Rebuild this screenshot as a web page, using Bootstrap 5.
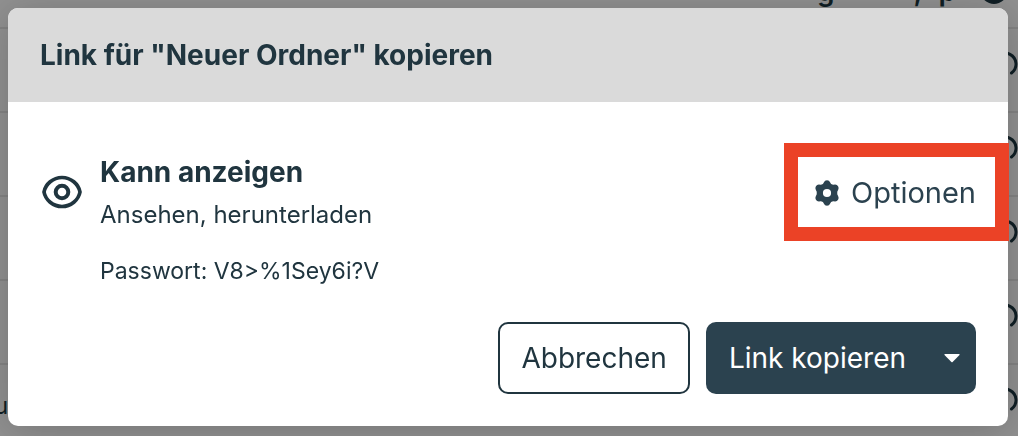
<!DOCTYPE html>
<html lang="de">
<head>
<meta charset="utf-8">
<meta name="viewport" content="width=device-width, initial-scale=1">
<title>Link kopieren</title>
<link href="https://cdn.jsdelivr.net/npm/bootstrap@5.3.0/dist/css/bootstrap.min.css" rel="stylesheet">
<style>
  :root { --ink: #20353f; --petrol: #2b424f; --marker: #eb4226; }
  body { font-family: Inter, "Noto Sans", sans-serif; font-size: 24px; line-height: 42px; color: var(--ink); background: #919191; height: 100vh; overflow: hidden; }

  /* file list behind the dialog */
  .files-head { height: 27px; padding-right: 14px; gap: 28px; color: #101f25; line-height: 28px; font-size: 28px; font-weight: 600; }
  .files-head span { margin-top: -23px; }
  .files-sort { margin-right: 51px; }
  .files-row { height: 84px; border-top: 2px solid #848484; color: #101f25; }
  .files-row svg { margin-right: -2px; overflow: visible; }
  .files-name { margin-left: -6px; }

  .modal { padding: 8px 10px 8px 8px; }
  .modal-dialog { max-width: none; margin: 0; }
  .modal-content { color: var(--ink); border: 0; border-radius: 10px; box-shadow: 0 4px 40px rgba(0, 0, 0, .2); }
  .modal-header { padding: 26px 32px; background: #dadada; border: 0; border-radius: 10px 10px 0 0; }
  .modal-title { font-size: 28px; line-height: 42px; font-weight: 700; }
  .modal-body { padding: 48px 32px 0; }
  .modal-footer { padding: 30px 32px 32px; border: 0; gap: 16px; }
  .modal-footer > * { margin: 0; }

  .share-text { margin-left: 18px; }
  .share-role { font-size: 28px; line-height: 44px; font-weight: 700; }
  .share-pass { margin: 14px 0 0 60px; font-size: 23px; }
  .btn { --bs-btn-font-size: 28px; --bs-btn-line-height: 42px; }
  .btn-options { --bs-btn-font-size: 29px; --bs-btn-padding-x: 0; --bs-btn-padding-y: 0; --bs-btn-border-width: 0; --bs-btn-color: var(--petrol); gap: 10px; }
  .marker { position: absolute; inset: -29px -33px -27px -29px; border: 14px solid var(--marker); pointer-events: none; }
  .btn-cancel { --bs-btn-padding-x: 21px; --bs-btn-padding-y: 13px; --bs-btn-border-width: 2px; --bs-btn-border-radius: 10px; --bs-btn-border-color: var(--ink); --bs-btn-color: var(--ink); --bs-btn-bg: #fff; }
  .btn-copy { --bs-btn-padding-x: 23px; --bs-btn-padding-y: 15px; --bs-btn-border-width: 0; --bs-btn-border-radius: 10px; --bs-btn-bg: var(--petrol); --bs-btn-color: #fff; }
  .btn-arrow { --bs-btn-padding-x: 16px; }
</style>
</head>
<body>
<main aria-hidden="true">
  <div class="files-head d-flex justify-content-end align-items-start"><span class="files-sort">g</span><div class="d-flex gap-3"><span>,</span><span>p</span></div><svg width="20" height="5" viewBox="0 0 20 5" fill="none" stroke="currentColor" stroke-width="4"><path d="M1-2Q10 6 19-2"/></svg></div>
  <div class="files-row d-flex align-items-center justify-content-end"><svg width="30" height="28" viewBox="0 0 30 28" fill="none" stroke="currentColor" stroke-width="3"><path id="arc" d="M4 8a11 11 0 1 1 17.500 9" stroke-linecap="round"/></svg></div>
  <div class="files-row d-flex align-items-center justify-content-end"><svg width="30" height="28" viewBox="0 0 30 28" fill="none" stroke="currentColor" stroke-width="3"><use href="#arc"/></svg></div>
  <div class="files-row d-flex align-items-center justify-content-end"><svg width="30" height="28" viewBox="0 0 30 28" fill="none" stroke="currentColor" stroke-width="3"><use href="#arc"/></svg></div>
  <div class="files-row d-flex align-items-center justify-content-end"><svg width="30" height="28" viewBox="0 0 30 28" fill="none" stroke="currentColor" stroke-width="3"><use href="#arc"/></svg></div>
  <div class="files-row d-flex align-items-center justify-content-between"><span class="files-name">u</span><svg width="30" height="28" viewBox="0 0 30 28" fill="none" stroke="currentColor" stroke-width="3"><use href="#arc"/></svg></div>
</main>

<div class="modal d-block" role="dialog" aria-modal="true" aria-labelledby="dialogTitle">
  <div class="modal-dialog">
    <div class="modal-content">
      <div class="modal-header">
        <h1 class="modal-title" id="dialogTitle">Link für "Neuer Ordner" kopieren</h1>
      </div>
      <div class="modal-body">
        <div class="d-flex align-items-center">
          <svg class="flex-shrink-0" width="42" height="36" viewBox="0 0 42 36" fill="none" stroke="currentColor" aria-hidden="true">
            <path d="M4 17C5.500 9 13 2.500 22 2.500S38.500 9 40 17C38.500 25 31 31.500 22 31.500S5.500 25 4 17Z" stroke-width="3.700" stroke-linejoin="round"/>
            <circle cx="22" cy="17" r="6.300" stroke-width="4"/>
          </svg>
          <div class="share-text flex-grow-1">
            <div class="share-role">Kann anzeigen</div>
            <div>Ansehen, herunterladen</div>
          </div>
          <div class="position-relative">
            <button type="button" class="btn btn-options d-flex align-items-center">
              <svg width="28" height="28" viewBox="0 0 24 24" fill="currentColor" aria-hidden="true"><path d="M12 1Q14 1 14.600 2.800L15.500 4.300 17.200 4.900 19 4.800Q20.700 4.900 21.500 6.300 22.400 7.800 21.600 9.200L20.800 11 20.800 13 21.600 14.800Q22.400 16.200 21.500 17.700 20.700 19.100 19 19.200L17.200 19.100 15.500 19.700 14.600 21.200Q14 23 12 23T9.400 21.200L8.500 19.700 6.800 19.100 5 19.200Q3.300 19.100 2.500 17.700 1.600 16.200 2.400 14.800L3.200 13 3.200 11 2.400 9.200Q1.600 7.800 2.500 6.300 3.300 4.900 5 4.800L6.800 4.900 8.500 4.300 9.400 2.800Q10 1 12 1ZM12 8.500a3.500 3.500 0 1 0 0 7 3.500 3.500 0 0 0 0-7Z" fill-rule="evenodd"/></svg>
              Optionen
            </button>
            <span class="marker"></span>
          </div>
        </div>
        <div class="share-pass">Passwort: V8&gt;%1Sey6i?V</div>
      </div>
      <div class="modal-footer">
        <button type="button" class="btn btn-cancel">Abbrechen</button>
        <div class="btn-group">
          <button type="button" class="btn btn-copy">Link kopieren</button>
          <button type="button" class="btn btn-copy btn-arrow" aria-label="Weitere Aktionen"><svg class="d-block" width="16" height="9" viewBox="0 0 16 9" fill="currentColor"><path d="M1 0h14q1 0 .5 1L8.600 8q-.6.600-1.200 0L.5 1Q0 0 1 0Z"/></svg></button>
        </div>
      </div>
    </div>
  </div>
</div>
</body>
</html>
